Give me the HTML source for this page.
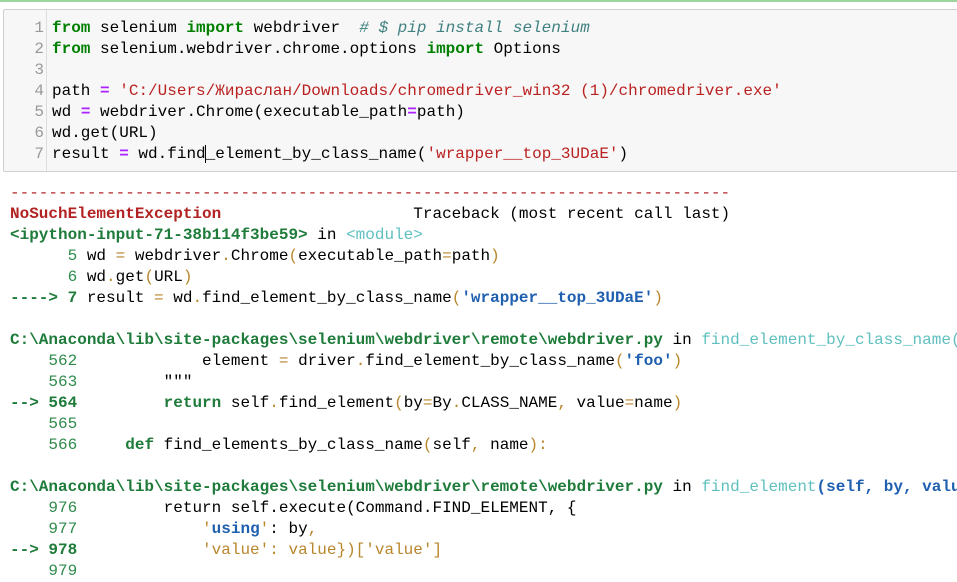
<!DOCTYPE html>
<html><head><meta charset="utf-8"><style>
body{margin:0;width:957px;height:572px;overflow:hidden;background:#fff;font-family:"Liberation Mono","DejaVu Sans Mono",monospace;font-size:16px;}
.top{position:absolute;left:0;top:0;width:957px;height:2px;background:#5cb85c;opacity:.6}
.inp{position:absolute;left:3px;top:9px;width:960px;height:163px;background:#f7f7f7;border:1px solid #cfcfcf;border-radius:2px;box-sizing:border-box}
.gut{position:absolute;left:0;top:8px;width:40px;text-align:right;color:#999;line-height:21px;white-space:pre}
.sep{position:absolute;left:42px;top:0;bottom:0;width:1px;background:#ddd}
.code{position:absolute;left:48px;top:8px;line-height:21px;white-space:pre;color:#000}
.k{color:#008000;font-weight:bold}.o{color:#aa22ff;font-weight:bold}.s{color:#ba2121}.c{color:#408080;font-style:italic}
.out{position:absolute;left:10px;top:183px;line-height:21px;white-space:pre;color:#000}
.r{color:#b22222;font-weight:bold}.g{color:#1e7b3a;font-weight:bold}.n{color:#2f8a4c}.y{color:#b8862b}.cy{color:#60c0c0}.b{color:#1f5fb0;font-weight:bold}.bb{color:#1f5fb0;font-weight:bold}
.cur{border-left:1px solid #000;margin-left:-1px}
</style></head><body>
<div class="top"></div>
<div class="inp"><div class="gut">1
2
3
4
5
6
7</div><div class="sep"></div><div class="code"><span class="k">from</span> selenium <span class="k">import</span> webdriver  <span class="c"># $ pip install selenium</span>
<span class="k">from</span> selenium.webdriver.chrome.options <span class="k">import</span> Options

path <span class="o">=</span> <span class="s">'C:/Users/Жираслан/Downloads/chromedriver_win32 (1)/chromedriver.exe'</span>
wd <span class="o">=</span> webdriver.Chrome(executable_path<span class="o">=</span>path)
wd.get(URL)
result <span class="o">=</span> wd.find<span class="cur"></span>_element_by_class_name(<span class="s">'wrapper__top_3UDaE'</span>)</div></div>
<div class="out"><span class="r" style="font-weight:normal;color:#b22222">---------------------------------------------------------------------------</span>
<span class="r">NoSuchElementException</span>                    Traceback (most recent call last)
<span class="g">&lt;ipython-input-71-38b114f3be59&gt;</span> in <span class="cy">&lt;module&gt;</span>
<span class="n">      5</span> wd <span class="y">=</span> webdriver<span class="y">.</span>Chrome<span class="y">(</span>executable_path<span class="y">=</span>path<span class="y">)</span>
<span class="n">      6</span> wd<span class="y">.</span>get<span class="y">(</span>URL<span class="y">)</span>
<span class="g">----&gt; 7</span> result <span class="y">=</span> wd<span class="y">.</span>find_element_by_class_name<span class="y">(</span><span class="b">'wrapper__top_3UDaE'</span><span class="y">)</span>

<span class="g">C:\Anaconda\lib\site-packages\selenium\webdriver\remote\webdriver.py</span> in <span class="cy">find_element_by_class_name(</span>
<span class="n">    562</span>             element <span class="y">=</span> driver<span class="y">.</span>find_element_by_class_name<span class="y">(</span><span class="b">'foo'</span><span class="y">)</span>
<span class="n">    563</span>         """
<span class="g">--&gt; 564</span>         <span class="g">return</span> self<span class="y">.</span>find_element<span class="y">(</span>by<span class="y">=</span>By<span class="y">.</span>CLASS_NAME<span class="y">,</span> value<span class="y">=</span>name<span class="y">)</span>
<span class="n">    565</span>
<span class="n">    566</span>     <span class="g">def</span> find_elements_by_class_name<span class="y">(</span>self<span class="y">,</span> name<span class="y">):</span>

<span class="g">C:\Anaconda\lib\site-packages\selenium\webdriver\remote\webdriver.py</span> in <span class="cy">find_element</span><span class="bb">(self, by, value</span>
<span class="n">    976</span>         return self.execute(Command.FIND_ELEMENT, {
<span class="n">    977</span>             <span class="y">'</span><span class="b">using</span><span class="y">'</span>: by<span class="y">,</span>
<span class="g">--&gt; 978</span>             <span class="y">'value': value})['value']</span>
<span class="n">    979</span></div>
</body></html>
